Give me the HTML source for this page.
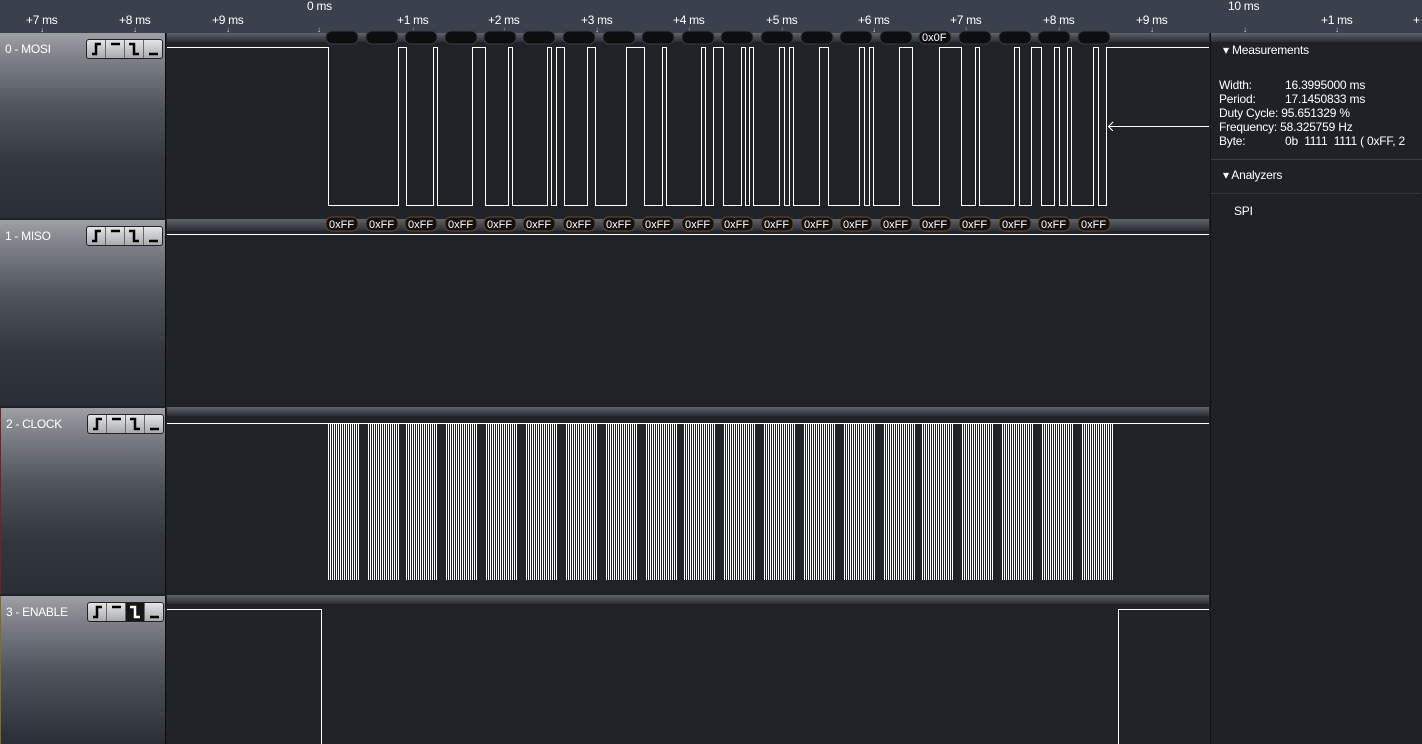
<!DOCTYPE html>
<html><head><meta charset="utf-8"><style>
*{margin:0;padding:0;box-sizing:border-box}
body{width:1422px;height:744px;overflow:hidden;background:#1f2227;font-family:"Liberation Sans",sans-serif;font-size:12px;color:#fff;position:relative}
.abs{position:absolute}
.ruler{left:0;top:0;width:1422px;height:33px;background:#3a404c}
.rl{position:absolute;top:13px;font-size:12px;color:#fff;letter-spacing:-0.3px}
.ar{position:absolute;top:25px;font-size:8px;color:#ddd}
.lp{left:0;width:166px;background:linear-gradient(#9da0a5 0,#7e8188 25px,#50545c 75px,#33373e 130px,#2a2e35 100%);border-right:1px solid #0b0c0e}
.lab{position:absolute;left:5px;top:9px;font-size:12px;color:#fff;letter-spacing:-0.3px}
.btns{position:absolute;left:86px;top:6px;width:77px;height:20px;border:1px solid #222;border-radius:3px;background:linear-gradient(#e4e5e7,#a9abaf);display:flex;overflow:hidden}
.btns div{flex:1;border-right:1px solid #666;position:relative}
.btns div:last-child{border-right:none}
.btns svg{position:absolute;left:0;top:0}
.strip{left:167px;width:1042px;height:9px;background:linear-gradient(#5f636a,#2a2d33)}
.rp{left:1210px;top:33px;width:212px;height:711px;background:#1e2125;border-left:1px solid #111}
.m{position:absolute;font-size:12px;letter-spacing:-0.2px}
</style></head><body>
<div class="abs ruler">
<div class="rl" style="left:26px">+7 ms</div><div class="ar" style="left:40px">↓</div>
<div class="rl" style="left:119px">+8 ms</div><div class="ar" style="left:133px">↓</div>
<div class="rl" style="left:212px">+9 ms</div><div class="ar" style="left:226px">↓</div>
<div class="rl" style="left:307px;top:-1px">0 ms</div><div class="ar" style="left:317px">↓</div>
<div class="rl" style="left:397px">+1 ms</div><div class="ar" style="left:411px">↓</div>
<div class="rl" style="left:488px">+2 ms</div><div class="ar" style="left:502px">↓</div>
<div class="rl" style="left:581px">+3 ms</div><div class="ar" style="left:595px">↓</div>
<div class="rl" style="left:673px">+4 ms</div><div class="ar" style="left:687px">↓</div>
<div class="rl" style="left:766px">+5 ms</div><div class="ar" style="left:780px">↓</div>
<div class="rl" style="left:858px">+6 ms</div><div class="ar" style="left:872px">↓</div>
<div class="rl" style="left:950px">+7 ms</div><div class="ar" style="left:964px">↓</div>
<div class="rl" style="left:1043px">+8 ms</div><div class="ar" style="left:1057px">↓</div>
<div class="rl" style="left:1136px">+9 ms</div><div class="ar" style="left:1150px">↓</div>
<div class="rl" style="left:1228px;top:-1px">10 ms</div><div class="ar" style="left:1243px">↓</div>
<div class="rl" style="left:1321px">+1 ms</div><div class="ar" style="left:1335px">↓</div>
<div class="rl" style="left:1413px">+</div>
</div>

<div class="abs lp" style="top:33px;height:185px"><div class="lab">0 - MOSI</div><div class="btns">
<div><svg width="19" height="18"><path d="M5 14h4V4h5" stroke="#000" stroke-width="2.5" fill="none"/></svg></div>
<div><svg width="19" height="18"><path d="M5 4h9" stroke="#000" stroke-width="2.5" fill="none"/></svg></div>
<div><svg width="19" height="18"><path d="M4 4h5v10h5" stroke="#000" stroke-width="2.5" fill="none"/></svg></div>
<div><svg width="19" height="18"><path d="M5 14h9" stroke="#000" stroke-width="2.5" fill="none"/></svg></div></div></div>
<div class="abs lp" style="top:220px;height:186px"><div class="lab">1 - MISO</div><div class="btns">
<div><svg width="19" height="18"><path d="M5 14h4V4h5" stroke="#000" stroke-width="2.5" fill="none"/></svg></div>
<div><svg width="19" height="18"><path d="M5 4h9" stroke="#000" stroke-width="2.5" fill="none"/></svg></div>
<div><svg width="19" height="18"><path d="M4 4h5v10h5" stroke="#000" stroke-width="2.5" fill="none"/></svg></div>
<div><svg width="19" height="18"><path d="M5 14h9" stroke="#000" stroke-width="2.5" fill="none"/></svg></div></div></div>
<div class="abs lp" style="top:408px;height:186px;border-left:1px solid #8a1a1a"><div class="lab">2 - CLOCK</div><div class="btns">
<div><svg width="19" height="18"><path d="M5 14h4V4h5" stroke="#000" stroke-width="2.5" fill="none"/></svg></div>
<div><svg width="19" height="18"><path d="M5 4h9" stroke="#000" stroke-width="2.5" fill="none"/></svg></div>
<div><svg width="19" height="18"><path d="M4 4h5v10h5" stroke="#000" stroke-width="2.5" fill="none"/></svg></div>
<div><svg width="19" height="18"><path d="M5 14h9" stroke="#000" stroke-width="2.5" fill="none"/></svg></div></div></div>
<div class="abs lp" style="top:596px;height:148px;border-left:1px solid #8a6a1a"><div class="lab">3 - ENABLE</div><div class="btns">
<div><svg width="19" height="18"><path d="M5 14h4V4h5" stroke="#000" stroke-width="2.5" fill="none"/></svg></div>
<div><svg width="19" height="18"><path d="M5 4h9" stroke="#000" stroke-width="2.5" fill="none"/></svg></div>
<div style="background:#151618"><svg width="19" height="18"><path d="M4 4h5v10h5" stroke="#fff" stroke-width="2.5" fill="none"/></svg></div>
<div><svg width="19" height="18"><path d="M5 14h9" stroke="#000" stroke-width="2.5" fill="none"/></svg></div></div></div>

<div class="abs strip" style="top:33px"></div>
<div class="abs strip" style="top:219px;height:12px"></div>
<div class="abs strip" style="top:407px"></div>
<div class="abs strip" style="top:595px"></div>

<svg class="abs" style="left:0;top:0" width="1422" height="744">
<defs><pattern id="clk" x="0" y="0" width="2" height="10" patternUnits="userSpaceOnUse"><rect x="0" y="0" width="1" height="10" fill="#fff"/></pattern></defs>
<g fill="#0d0e10" stroke="#3a3d42" stroke-width="1">
<rect x="326" y="31" width="32" height="13" rx="6"/><rect x="366" y="31" width="32" height="13" rx="6"/><rect x="405" y="31" width="32" height="13" rx="6"/><rect x="445" y="31" width="32" height="13" rx="6"/><rect x="484" y="31" width="32" height="13" rx="6"/><rect x="523" y="31" width="32" height="13" rx="6"/><rect x="563" y="31" width="32" height="13" rx="6"/><rect x="603" y="31" width="32" height="13" rx="6"/><rect x="642" y="31" width="32" height="13" rx="6"/><rect x="682" y="31" width="32" height="13" rx="6"/><rect x="721" y="31" width="32" height="13" rx="6"/><rect x="761" y="31" width="32" height="13" rx="6"/><rect x="801" y="31" width="32" height="13" rx="6"/><rect x="840" y="31" width="32" height="13" rx="6"/><rect x="880" y="31" width="32" height="13" rx="6"/><rect x="919" y="31" width="32" height="13" rx="6"/><rect x="959" y="31" width="32" height="13" rx="6"/><rect x="999" y="31" width="32" height="13" rx="6"/><rect x="1038" y="31" width="32" height="13" rx="6"/><rect x="1078" y="31" width="32" height="13" rx="6"/>
</g>
<text x="922" y="41" fill="#fff" font-size="11" font-family="Liberation Sans">0x0F</text>
<g fill="#15110f" stroke="#6a4a30">
<rect x="326" y="217" width="32" height="14" rx="6"/><rect x="366" y="217" width="32" height="14" rx="6"/><rect x="405" y="217" width="32" height="14" rx="6"/><rect x="445" y="217" width="32" height="14" rx="6"/><rect x="484" y="217" width="32" height="14" rx="6"/><rect x="523" y="217" width="32" height="14" rx="6"/><rect x="563" y="217" width="32" height="14" rx="6"/><rect x="603" y="217" width="32" height="14" rx="6"/><rect x="642" y="217" width="32" height="14" rx="6"/><rect x="682" y="217" width="32" height="14" rx="6"/><rect x="721" y="217" width="32" height="14" rx="6"/><rect x="761" y="217" width="32" height="14" rx="6"/><rect x="801" y="217" width="32" height="14" rx="6"/><rect x="840" y="217" width="32" height="14" rx="6"/><rect x="880" y="217" width="32" height="14" rx="6"/><rect x="919" y="217" width="32" height="14" rx="6"/><rect x="959" y="217" width="32" height="14" rx="6"/><rect x="999" y="217" width="32" height="14" rx="6"/><rect x="1038" y="217" width="32" height="14" rx="6"/><rect x="1078" y="217" width="32" height="14" rx="6"/>
</g>
<g fill="#fff" font-size="11" font-family="Liberation Sans">
<text x="329" y="228">0xFF</text><text x="369" y="228">0xFF</text><text x="408" y="228">0xFF</text><text x="448" y="228">0xFF</text><text x="487" y="228">0xFF</text><text x="526" y="228">0xFF</text><text x="566" y="228">0xFF</text><text x="606" y="228">0xFF</text><text x="645" y="228">0xFF</text><text x="685" y="228">0xFF</text><text x="724" y="228">0xFF</text><text x="764" y="228">0xFF</text><text x="804" y="228">0xFF</text><text x="843" y="228">0xFF</text><text x="883" y="228">0xFF</text><text x="922" y="228">0xFF</text><text x="962" y="228">0xFF</text><text x="1002" y="228">0xFF</text><text x="1041" y="228">0xFF</text><text x="1081" y="228">0xFF</text>
</g>
<g fill="none" stroke="#fff" stroke-width="1" shape-rendering="crispEdges">
<polyline points="167,47.5 328.5,47.5 328.5,205.5 398.5,205.5 398.5,47.5 406.5,47.5 406.5,205.5 433.5,205.5 433.5,47.5 437.5,47.5 437.5,205.5 472.5,205.5 472.5,47.5 485.5,47.5 485.5,205.5 508.5,205.5 508.5,47.5 512.5,47.5 512.5,205.5 547.5,205.5 547.5,47.5 551.5,47.5 551.5,205.5 556.5,205.5 556.5,47.5 564.5,47.5 564.5,205.5 587.5,205.5 587.5,47.5 595.5,47.5 595.5,205.5 626.5,205.5 626.5,47.5 644.5,47.5 644.5,205.5 662.5,205.5 662.5,47.5 666.5,47.5 666.5,205.5 701.5,205.5 701.5,47.5 705.5,47.5 705.5,205.5 713.5,205.5 713.5,47.5 723.5,47.5 723.5,205.5 741.5,205.5 741.5,47.5 745.5,47.5 745.5,205.5 749.5,205.5 749.5,47.5 753.5,47.5 753.5,205.5 779.5,205.5 779.5,47.5 784.5,47.5 784.5,205.5 789.5,205.5 789.5,47.5 793.5,47.5 793.5,205.5 819.5,205.5 819.5,47.5 828.5,47.5 828.5,205.5 859.5,205.5 859.5,47.5 864.5,47.5 864.5,205.5 869.5,205.5 869.5,47.5 873.5,47.5 873.5,205.5 899.5,205.5 899.5,47.5 912.5,47.5 912.5,205.5 939.5,205.5 939.5,47.5 961.5,47.5 961.5,205.5 975.5,205.5 975.5,47.5 979.5,47.5 979.5,205.5 1014.5,205.5 1014.5,47.5 1019.5,47.5 1019.5,205.5 1031.5,205.5 1031.5,47.5 1041.5,47.5 1041.5,205.5 1054.5,205.5 1054.5,47.5 1059.5,47.5 1059.5,205.5 1067.5,205.5 1067.5,47.5 1071.5,47.5 1071.5,205.5 1093.5,205.5 1093.5,47.5 1098.5,47.5 1098.5,205.5 1106.5,205.5 1106.5,47.5 1209,47.5"/>
<line x1="167" y1="234.5" x2="1209" y2="234.5"/>
<line x1="167" y1="423.5" x2="1209" y2="423.5"/>
<polyline points="167,609.5 321.5,609.5 321.5,744"/>
<polyline points="1118.5,744 1118.5,609.5 1209,609.5"/>
<line x1="1108" y1="126.5" x2="1209" y2="126.5"/>
<polyline points="1113,122 1108.5,126.5 1113,131"/>
</g>
<g fill="url(#clk)">
<rect x="327" y="423" width="32" height="157"/><rect x="367" y="423" width="32" height="157"/><rect x="406" y="423" width="32" height="157"/><rect x="446" y="423" width="32" height="157"/><rect x="486" y="423" width="32" height="157"/><rect x="525" y="423" width="32" height="157"/><rect x="565" y="423" width="32" height="157"/><rect x="605" y="423" width="32" height="157"/><rect x="645" y="423" width="32" height="157"/><rect x="684" y="423" width="32" height="157"/><rect x="724" y="423" width="32" height="157"/><rect x="764" y="423" width="32" height="157"/><rect x="803" y="423" width="32" height="157"/><rect x="843" y="423" width="32" height="157"/><rect x="883" y="423" width="32" height="157"/><rect x="922" y="423" width="32" height="157"/><rect x="962" y="423" width="32" height="157"/><rect x="1002" y="423" width="32" height="157"/><rect x="1042" y="423" width="32" height="157"/><rect x="1081" y="423" width="32" height="157"/>
</g>
</svg>

<div class="abs rp">
<div class="abs" style="left:0;top:0;width:212px;height:9px;background:linear-gradient(#5f636a,#2a2d33)"></div>
<div class="m" style="left:12px;top:10px">▾ Measurements</div>
<div class="m" style="left:8px;top:45px;line-height:14px">Width:<br>Period:<br>Duty Cycle: 95.651329 %<br>Frequency: 58.325759 Hz<br>Byte:</div>
<div class="m" style="left:74px;top:45px;line-height:14px">16.3995000 ms<br>17.1450833 ms</div>
<div class="m" style="left:74px;top:101px;white-space:pre">0b  1111  1111 ( 0xFF, 2</div>
<div class="abs" style="left:0;top:126px;width:212px;height:1px;background:#3a3e45"></div>
<div class="m" style="left:12px;top:135px">▾ Analyzers</div>
<div class="abs" style="left:0;top:160px;width:212px;border-top:1px dotted #444"></div>
<div class="m" style="left:23px;top:171px">SPI</div>
</div>
</body></html>
